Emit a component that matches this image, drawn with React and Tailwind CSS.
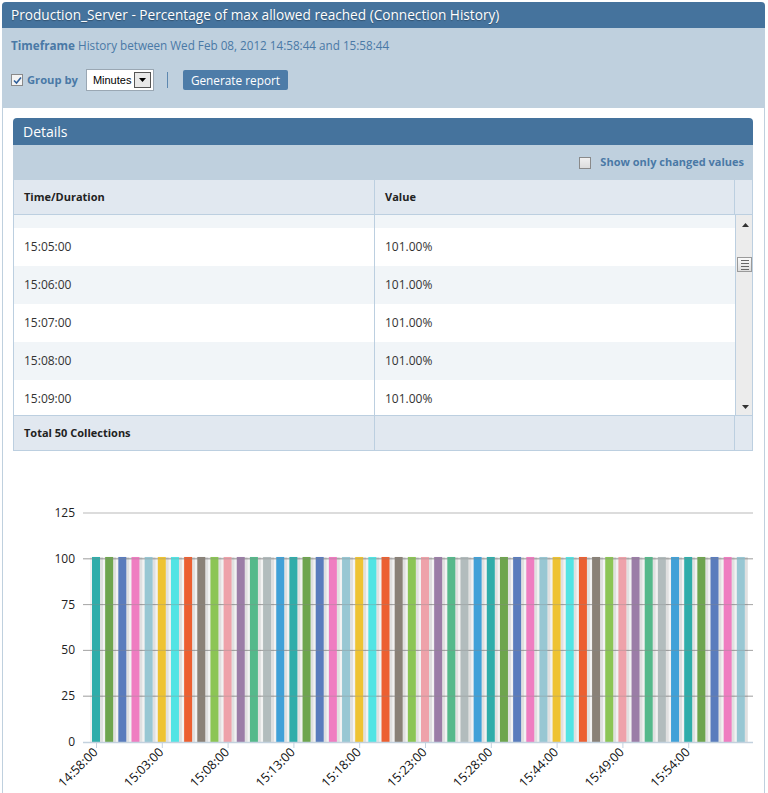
import React from "react";

const colors = [
  "#2fadaa", "#6ea54e", "#5a7cbd", "#ef7dc1", "#98c7d3",
  "#eec333", "#52e4e4", "#ec5f31", "#8a8177", "#8cc555",
  "#eea2aa", "#9b7da7", "#55b98b", "#b2bcbd", "#40a1d8",
];

const rows = ["15:05:00", "15:06:00", "15:07:00", "15:08:00", "15:09:00"];

const ticks = [
  "14:58:00", "15:03:00", "15:08:00", "15:13:00", "15:18:00",
  "15:23:00", "15:28:00", "15:44:00", "15:49:00", "15:54:00",
];

const y = (v) => 291 - v * 1.832;

const Chart = () => {
  const bars = Array.from({ length: 50 }, (_, i) => i);
  return (
    <svg width="740" height="343" className="block">
      {[125, 100, 75, 50, 25].map((v) => (
        <g key={v}>
          <line x1="70" x2="740" y1={y(v)} y2={y(v)} stroke="#b9b9b9" strokeWidth="1" />
          <text x="62" y={y(v) + 4} textAnchor="end" fontSize="12" fill="#222">
            {v}
          </text>
        </g>
      ))}
      <text x="62" y={y(0) + 4} textAnchor="end" fontSize="12" fill="#222">
        0
      </text>
      {/* bars */}
      {bars.map((i) => {
        const x = 79 + i * 13.16;
        return (
          <g key={i}>
            <rect x={x - 2} y={y(101)} width="13" height={291 - y(101)} fill="#000" opacity="0.05" />
            <rect x={x + 8} y={y(101)} width="3" height={291 - y(101)} fill="#000" opacity="0.07" />
            <rect x={x} y={y(101)} width="8" height={291 - y(101)} fill={colors[i % 15]} />
          </g>
        );
      })}
      {/* gridline over bars, faint */}
      {[100, 75, 50, 25].map((v) => (
        <line key={v} x1="70" x2="740" y1={y(v)} y2={y(v)} stroke="#888" strokeWidth="1" opacity="0.35" />
      ))}
      <line x1="70" x2="740" y1="291.5" y2="291.5" stroke="#c3d1de" strokeWidth="1.5" />
      {ticks.map((t, k) => {
        const tx = 83.5 + k * 65.8;
        return (
          <g key={t}>
            <line x1={tx} x2={tx} y1="292" y2="297" stroke="#c3d1de" strokeWidth="1" />
            <text
              x={tx + 2}
              y="302"
              textAnchor="end"
              fontSize="12.5"
              fill="#111"
              transform={`rotate(-45 ${tx + 2} 302)`}
            >
              {t}
            </text>
          </g>
        );
      })}
    </svg>
  );
};

const App = () => {
  return (
    <div className="w-[768px] h-[793px] overflow-hidden bg-white font-['Open_Sans',sans-serif]">
      <div className="ml-[2px] mt-[2px] w-[763px] border-x border-[#bfd0de] rounded-t-[4px]">
        {/* Title bar */}
        <div className="h-[26px] bg-[#45739d] rounded-t-[4px] flex items-center px-[9px] text-white text-[13.65px] [text-shadow:0_1px_1px_rgba(0,0,0,0.3)] -mx-px">
          Production_Server - Percentage of max allowed reached (Connection History)
        </div>

        {/* Filter area */}
        <div className="bg-[#bfd0de] h-[80px] px-[9px] pt-[8px] -mx-px">
          <p className="text-[11.7px] text-[#4a79a6] leading-[18px]">
            <span className="font-bold">Timeframe</span> History between Wed Feb 08, 2012 14:58:44 and 15:58:44
          </p>
          <div className="flex items-center mt-[15px] h-[22px]">
            <span className="w-[12px] h-[12px] border border-[#8a8a8a] bg-[#f4f4f4] flex items-center justify-center">
              <svg width="9" height="9" viewBox="0 0 9 9">
                <path d="M1 4.5 L3.5 7 L8 1.5" fill="none" stroke="#2f5f9a" strokeWidth="1.6" />
              </svg>
            </span>
            <span className="ml-[4px] text-[11.2px] font-bold text-[#4a79a6]">Group by</span>
            <div className="ml-[8px] w-[68px] h-[22px] bg-white border border-[#9aa7b3] flex items-center pl-[6px] pr-[2px] justify-between">
              <span className="text-[11px] text-black font-['Liberation_Sans',sans-serif]">Minutes</span>
              <span className="w-[17px] h-[16px] border border-[#555] bg-[#e8e8e8] flex items-center justify-center">
                <svg width="7" height="4" viewBox="0 0 7 4">
                  <path d="M0 0 H7 L3.5 4 Z" fill="#000" />
                </svg>
              </span>
            </div>
            <span className="ml-[13px] w-px h-[16px] bg-[#5d88b0]" />
            <button className="ml-[15px] h-[20px] px-[8px] bg-[#4d7ca8] rounded-[2px] text-white text-[11.8px] leading-[20px]">
              Generate report
            </button>
          </div>
        </div>

        {/* White content */}
        <div className="bg-white pt-[10px] pl-[10px]">
          <div className="w-[740px]">
            <div className="h-[27px] bg-[#45739d] rounded-t-[4px] flex items-center px-[10px] text-white text-[14px]">
              Details
            </div>
            <div className="h-[35px] bg-[#bfd0de] flex items-center justify-end pr-[9px]">
              <span className="w-[12px] h-[12px] border border-[#8a8a8a] bg-gradient-to-b from-[#f0f0f0] to-[#dcdcdc]" />
              <span className="ml-[9px] text-[11px] font-bold text-[#4a79a6]">Show only changed values</span>
            </div>

            <div className="border-x border-b border-[#bccfe0]">
              {/* header */}
              <div className="flex h-[35px] bg-[#e1e8f0] border-b border-[#bccfe0] text-[11px] font-bold text-[#222]">
                <div className="w-[361px] border-r border-[#bccfe0] flex items-center pl-[10px]">Time/Duration</div>
                <div className="w-[360px] border-r border-[#bccfe0] flex items-center pl-[10px]">Value</div>
                <div className="flex-1" />
              </div>

              {/* body */}
              <div className="flex h-[200px] overflow-hidden text-[12px] text-[#333]">
                <div className="w-[721px]">
                  <div className="h-[13px] bg-[#f1f5f8] flex">
                    <div className="w-[361px] border-r border-[#bccfe0]" />
                  </div>
                  {rows.map((r, i) => (
                    <div
                      key={r}
                      className={`flex h-[38px] ${i % 2 === 1 ? "bg-[#f1f5f8]" : "bg-white"}`}
                    >
                      <div className="w-[361px] border-r border-[#bccfe0] flex items-center pl-[10px]">{r}</div>
                      <div className="flex-1 flex items-center pl-[10px]">101.00%</div>
                    </div>
                  ))}
                </div>
                {/* scrollbar */}
                <div className="flex-1 bg-[#ececec] border-l border-[#bccfe0] relative">
                  <svg width="7" height="4" viewBox="0 0 7 4" className="absolute left-[6px] top-[8px]">
                    <path d="M0 4 H7 L3.5 0 Z" fill="#333" />
                  </svg>
                  <div className="absolute left-[1px] top-[42px] w-[15px] h-[15px] border border-[#9a9a9a] bg-gradient-to-b from-[#fafafa] to-[#dedede] flex flex-col items-center justify-center gap-[2px]">
                    <span className="w-[8px] h-px bg-[#666]" />
                    <span className="w-[8px] h-px bg-[#666]" />
                    <span className="w-[8px] h-px bg-[#666]" />
                    <span className="w-[8px] h-px bg-[#666]" />
                  </div>
                  <svg width="7" height="4" viewBox="0 0 7 4" className="absolute left-[6px] top-[190px]">
                    <path d="M0 0 H7 L3.5 4 Z" fill="#333" />
                  </svg>
                </div>
              </div>

              {/* footer */}
              <div className="flex h-[35px] bg-[#e1e8f0] border-t border-[#bccfe0] text-[11px] font-bold text-[#222]">
                <div className="w-[361px] border-r border-[#bccfe0] flex items-center pl-[10px]">Total 50 Collections</div>
                <div className="w-[360px] border-r border-[#bccfe0]" />
                <div className="flex-1" />
              </div>
            </div>

            <Chart />
          </div>
        </div>
      </div>
    </div>
  );
};

export default App;
